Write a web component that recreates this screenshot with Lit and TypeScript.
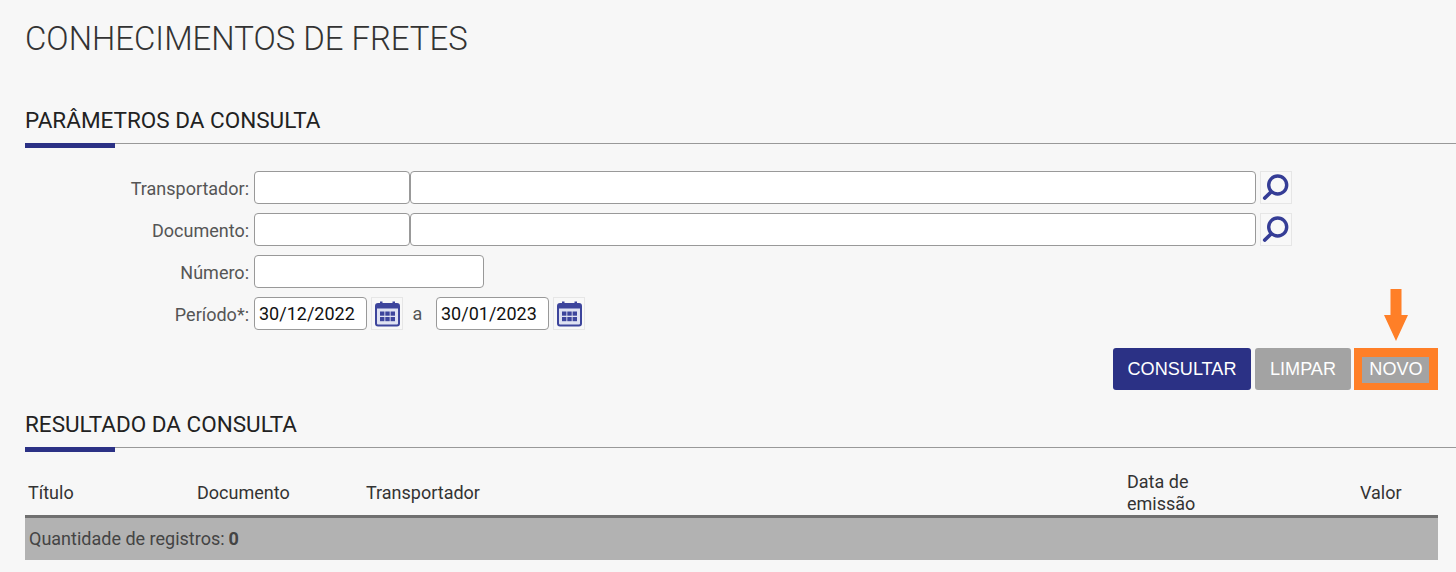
import { LitElement, html, css, svg } from 'lit';
import { customElement } from 'lit/decorators.js';

const searchIcon = svg`<svg class="glyph" width="32" height="33" viewBox="0 0 32 33">
  <circle cx="17.7" cy="14" r="9" fill="none" stroke="#353d96" stroke-width="3.4"/>
  <path d="M11 21 L4.8 27" fill="none" stroke="#353d96" stroke-width="3.8" stroke-linecap="round"/>
</svg>`;

const calendarIcon = svg`<svg class="glyph" width="32" height="33" viewBox="0 0 32 33">
  <rect x="5" y="7" width="23" height="21.5" rx="2" fill="#dfe2f2" stroke="#3d459c" stroke-width="2"/>
  <rect x="5" y="7" width="23" height="4.5" fill="#3d459c"/>
  <rect x="9" y="4.5" width="2.5" height="4" fill="#3d459c"/>
  <rect x="21.5" y="4.5" width="2.5" height="4" fill="#3d459c"/>
  <g fill="#3d459c">
    <rect x="9" y="14.5" width="4.4" height="4.2"/><rect x="14.3" y="14.5" width="4.4" height="4.2"/><rect x="19.6" y="14.5" width="4.4" height="4.2"/>
    <rect x="9" y="20" width="4.4" height="4.2"/><rect x="14.3" y="20" width="4.4" height="4.2"/><rect x="19.6" y="20" width="4.4" height="4.2"/>
  </g>
</svg>`;

@customElement('app-root')
export class AppRoot extends LitElement {
  static styles = css`
    :host {
      display: block;
      height: 572px;
      overflow: hidden;
      box-sizing: border-box;
      padding: 0 18px 0 25px;
      background: #f7f7f7;
      font-family: Roboto, sans-serif;
      color: #333;
    }
    h1 {
      margin: 0;
      padding-top: 20px;
      height: 63px;
      font-size: 32.9px;
      line-height: 38px;
      font-weight: 300;
      color: #333;
    }
    .section-title {
      position: relative;
      margin: 0;
      font-size: 22.5px;
      line-height: 26px;
      font-weight: 400;
      color: #222;
      height: 36px;
      border-bottom: 1px solid #999;
      margin-right: -18px;
    }
    .section-title::after {
      content: '';
      position: absolute;
      left: 0;
      top: 36px;
      width: 90px;
      height: 5px;
      background: #2b3185;
    }
    .first { margin-top: 24px; }
    .form {
      display: flex;
      flex-direction: column;
      gap: 9px;
      margin-top: 27px;
    }
    .row {
      display: flex;
      align-items: center;
      height: 33px;
    }
    label {
      width: 224px;
      margin-right: 5px;
      padding-top: 2px;
      text-align: right;
      font-size: 18px;
      color: #555;
      flex: none;
    }
    input {
      box-sizing: border-box;
      height: 33px;
      margin: 0;
      padding: 0 4px;
      border: 1px solid #999;
      border-radius: 4px;
      background: #fff;
      font-family: Roboto, sans-serif;
      font-size: 18px;
      color: #111;
      outline: none;
      flex: none;
    }
    .code { width: 156px; }
    .name { width: 846px; }
    .num { width: 230px; }
    .date { width: 113px; }
    .icon-btn {
      width: 32px;
      height: 33px;
      margin-left: 4px;
      box-sizing: border-box;
      background: #f8f8f8;
      border: 1px solid #e6e6e6;
      flex: none;
      display: flex;
      align-items: center;
      justify-content: center;
    }
    .glyph { display: block; margin: -1px; flex: none; filter: blur(0.4px); }
    .sep {
      width: 33px;
      box-sizing: border-box;
      padding-right: 4px;
      text-align: center;
      font-size: 18px;
      color: #555;
      flex: none;
    }
    .actions {
      position: relative;
      display: flex;
      justify-content: flex-end;
      gap: 4px;
      margin-top: 18px;
      height: 42px;
    }
    button {
      height: 42px;
      border: 0;
      border-radius: 3px;
      padding: 0;
      font-family: 'Liberation Sans', Arial, sans-serif;
      font-size: 18.1px;
      color: #fff;
      background: #a3a3a3;
    }
    .consult { width: 138px; background: #2b3185; }
    .clear { width: 96px; }
    .new { width: 84px; margin-left: -1px; position: relative; }
    .new::after {
      content: '';
      position: absolute;
      inset: 0;
      border: solid #ff7f27;
      border-width: 9px 9px 7px 8px;
    }
    .arrow {
      position: absolute;
      right: 30px;
      top: -59px;
      display: block;
    }
    .results { margin-top: 21px; }
    .table-head {
      display: grid;
      grid-template-columns: 169px 169px 761px 233px 81px;
      align-items: center;
      height: 70px;
      box-sizing: border-box;
      border-bottom: 3px solid #707070;
      padding-top: 22px;
      font-size: 18px;
      line-height: 22px;
      color: #333;
    }
    .table-head span { padding-left: 3px; }
    .table-foot {
      height: 42px;
      box-sizing: border-box;
      padding: 0 0 2px 4px;
      background: #b2b2b2;
      display: flex;
      align-items: center;
      font-size: 18px;
      color: #444;
    }
    .table-foot b { margin-left: 4px; font-weight: 700; }
  `;

  render() {
    return html`
      <h1>CONHECIMENTOS DE FRETES</h1>
      <h2 class="section-title first">PARÂMETROS DA CONSULTA</h2>
      <div class="form">
        <div class="row">
          <label>Transportador:</label>
          <input class="code" /><input class="name" />
          <span class="icon-btn">${searchIcon}</span>
        </div>
        <div class="row">
          <label>Documento:</label>
          <input class="code" /><input class="name" />
          <span class="icon-btn">${searchIcon}</span>
        </div>
        <div class="row">
          <label>Número:</label>
          <input class="num" />
        </div>
        <div class="row">
          <label>Período*:</label>
          <input class="date" value="30/12/2022" />
          <span class="icon-btn">${calendarIcon}</span>
          <span class="sep">a</span>
          <input class="date" value="30/01/2023" />
          <span class="icon-btn">${calendarIcon}</span>
        </div>
      </div>
      <div class="actions">
        <button class="consult">CONSULTAR</button>
        <button class="clear">LIMPAR</button>
        <button class="new">NOVO</button>
        <svg class="arrow" width="24" height="52" viewBox="0 0 24 52">
          <path d="M6.5 0 H17.5 V26 H24 L12 52 L0 26 H6.5 Z" fill="#ff7f27"/>
        </svg>
      </div>
      <div class="results">
        <h2 class="section-title">RESULTADO DA CONSULTA</h2>
        <div class="table-head">
          <span>Título</span>
          <span>Documento</span>
          <span>Transportador</span>
          <span>Data de<br />emissão</span>
          <span>Valor</span>
        </div>
        <div class="table-foot">Quantidade de registros:<b>0</b></div>
      </div>
    `;
  }
}
